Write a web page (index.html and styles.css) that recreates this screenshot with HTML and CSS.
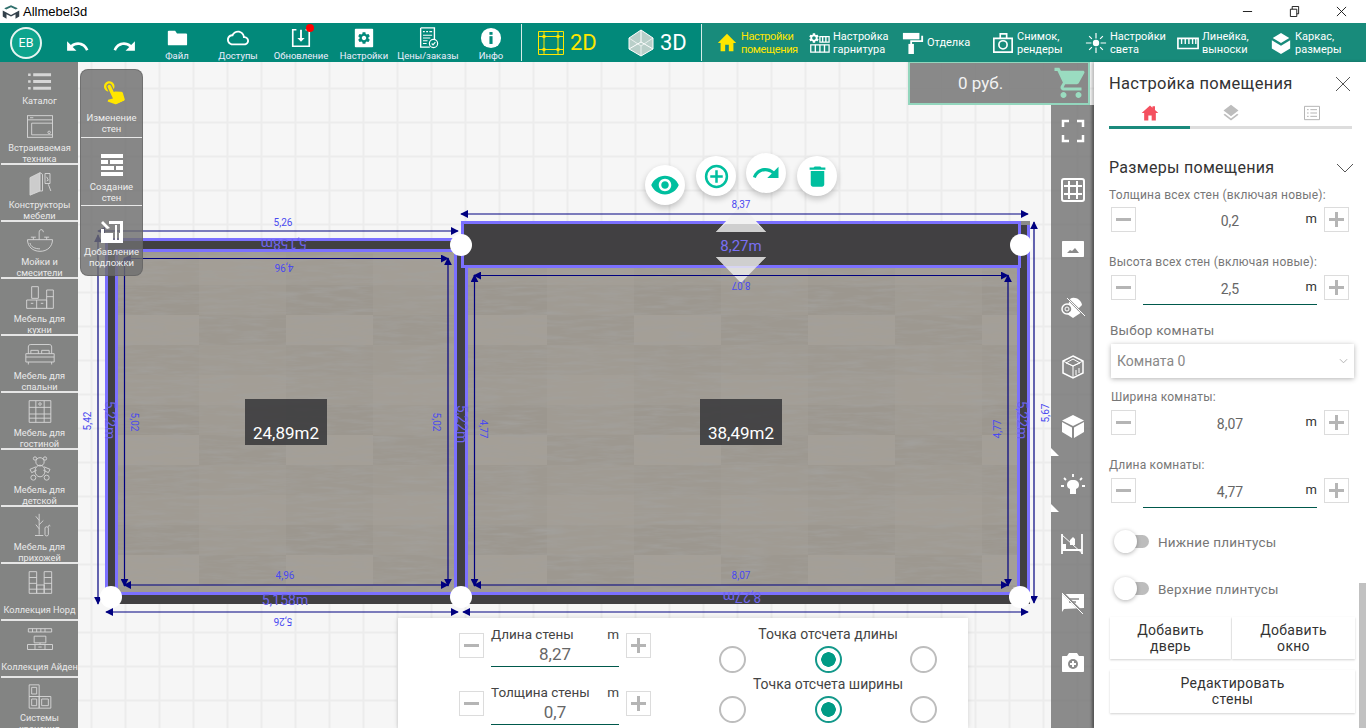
FILE: index.html
```html
<!DOCTYPE html>
<html lang="ru">
<head>
<meta charset="utf-8">
<title>Allmebel3d</title>
<link rel="stylesheet" href="styles.css">
</head>
<body>
<svg class="defs" width="0" height="0" aria-hidden="true">
  <defs>
    <symbol id="i-gear" viewBox="0 0 24 24"><path d="M19.14 12.94c.04-.3.06-.61.06-.94 0-.32-.02-.64-.07-.94l2.03-1.58c.18-.14.23-.41.12-.61l-1.92-3.32c-.12-.22-.37-.29-.59-.22l-2.39.96c-.5-.38-1.03-.7-1.62-.94l-.36-2.54c-.04-.24-.24-.41-.48-.41h-3.84c-.24 0-.43.17-.47.41l-.36 2.54c-.59.24-1.13.57-1.62.94l-2.39-.96c-.22-.08-.47 0-.59.22L2.74 8.87c-.12.21-.08.47.12.61l2.03 1.58c-.05.3-.09.63-.09.94s.02.64.07.94l-2.03 1.58c-.18.14-.23.41-.12.61l1.92 3.32c.12.22.37.29.59.22l2.39-.96c.5.38 1.03.7 1.62.94l.36 2.54c.05.24.24.41.48.41h3.84c.24 0 .44-.17.47-.41l.36-2.54c.59-.24 1.13-.56 1.62-.94l2.39.96c.22.08.47 0 .59-.22l1.92-3.32c.12-.22.07-.47-.12-.61l-2.01-1.58zM12 15.6c-1.98 0-3.6-1.62-3.6-3.6s1.62-3.6 3.6-3.6 3.6 1.62 3.6 3.6-1.62 3.6-3.6 3.6z"/></symbol>
    <marker id="arw" viewBox="0 0 10 10" refX="9" refY="5" markerWidth="8" markerHeight="8" markerUnits="userSpaceOnUse" orient="auto-start-reverse"><path d="M0 0L10 5L0 10z" fill="#000080"/></marker>
    <filter id="grain" x="0" y="0" width="100%" height="100%">
      <feTurbulence type="fractalNoise" baseFrequency="0.03 0.24" numOctaves="4" seed="11"/>
      <feColorMatrix values="0 0 0 0 0.36  0 0 0 0 0.35  0 0 0 0 0.33  1.2 1.2 0 0 -1.02"/>
    </filter>
    <pattern id="planks" width="174" height="120" patternUnits="userSpaceOnUse" patternTransform="translate(25 15)">
      <rect width="174" height="120" fill="#a09b93"/>
      <rect x="0" y="0" width="87" height="30" fill="#a39e96"/>
      <rect x="87" y="30" width="87" height="30" fill="#9c978f"/>
      <rect x="0" y="60" width="87" height="30" fill="#9d9890"/>
      <rect x="87" y="60" width="87" height="30" fill="#a49f97"/>
      <rect x="87" y="90" width="87" height="30" fill="#9e9991"/>
    </pattern>
  </defs>
</svg>

<header class="titlebar">
  <svg class="app-logo" viewBox="0 0 24 20"><path fill="#2f6f6c" d="M3 5l9-4 9 4-2.5 1.5L12 3.800 5.500 6.500z"/><path fill="#33414b" d="M1 8l11 6 11-6v8l-5 3v-6l-6 3-6-3v6l-5-3z"/></svg>
  <span class="app-name">Allmebel3d</span>
  <div class="win-controls">
    <svg viewBox="0 0 12 12"><path d="M1 6h10" stroke="#111" fill="none"/></svg>
    <svg viewBox="0 0 12 12"><path d="M1.500 3.500h7v8h-7zM3.500 3.500v-3h7v8h-2" stroke="#111" fill="none"/></svg>
    <svg viewBox="0 0 12 12"><path d="M1 1l10 10M11 1L1 11" stroke="#111" fill="none"/></svg>
  </div>
</header>

<nav class="toolbar">
  <div class="tools">
    <div class="avatar-cell"><span class="avatar">EB</span></div>
    <div class="tool"><svg class="ic-arrow" viewBox="0 0 24 24"><path d="M12.500 8c-2.650 0-5.050.99-6.900 2.600L2 7v9h9l-3.620-3.620c1.390-1.160 3.160-1.880 5.120-1.880 3.540 0 6.550 2.310 7.600 5.500l2.370-.78C21.080 11.030 17.150 8 12.500 8z"/></svg></div>
    <div class="tool"><svg class="ic-arrow" viewBox="0 0 24 24"><path d="M18.400 10.600C16.550 8.990 14.150 8 11.500 8c-4.650 0-8.580 3.030-9.960 7.220L3.900 16c1.050-3.190 4.050-5.500 7.600-5.500 1.950 0 3.730.72 5.120 1.880L13 16h9V7l-3.600 3.600z"/></svg></div>
    <div class="tool"><svg class="ic-top" viewBox="0 0 24 24"><path d="M10 4H3c-1.100 0-1 .9-1 2v13c0 .6.4 1 1 1h19c.6 0 1-.4 1-1V8c0-1.100-.9-1-2-1h-9l-2-3z"/></svg><span>Файл</span></div>
    <div class="tool"><svg class="ic-top" viewBox="0 0 24 24"><path d="M19.350 10.040C18.670 6.590 15.640 4 12 4 9.110 4 6.600 5.640 5.350 8.040 2.340 8.360 0 10.910 0 14c0 3.310 2.690 6 6 6h13c2.760 0 5-2.240 5-5 0-2.640-2.050-4.780-4.650-4.960zM19 18H6c-2.210 0-4-1.790-4-4s1.790-4 4-4h.71C7.370 7.690 9.480 6 12 6c3.040 0 5.500 2.460 5.500 5.500v.5H19c1.660 0 3 1.340 3 3s-1.340 3-3 3z"/></svg><span>Доступы</span></div>
    <div class="tool">
      <svg class="ic-top" viewBox="0 0 24 24"><path d="M7 3H3v18h18V3h-4" fill="none" stroke="#fff" stroke-width="1.800"/><path d="M11 3h2v9h3l-4 4-4-4h3z"/></svg>
      <span class="dot"></span><span>Обновление</span></div>
    <div class="tool"><svg class="ic-top" viewBox="0 0 24 24"><rect x="2" y="2" width="20" height="20" rx="1"/><use href="#i-gear" x="4" y="4" width="16" height="16" class="gear-cut"/></svg><span>Настройки</span></div>
    <div class="tool"><svg class="ic-top" viewBox="0 0 24 24"><path d="M4 1h15v12M14 22H4V1" fill="none" stroke="#fff" stroke-width="1.500"/><path d="M6.500 5h2M10 5h2M13.500 5h3M6.500 9h10M6.500 12h8M6.500 15h5M6.500 18h4" stroke="#fff" stroke-width="1.300"/><circle cx="18" cy="18" r="4.500" fill="#02897a" stroke="#fff" stroke-width="1.300"/><path d="M16 18l1.500 1.500 2.500-3" fill="none" stroke="#fff" stroke-width="1.200"/></svg><span>Цены/заказы</span></div>
    <div class="tool"><svg class="ic-top" viewBox="0 0 24 24"><circle cx="12" cy="12" r="11"/><rect x="10.300" y="10" width="3.400" height="8.500" fill="#02897a"/><rect x="10.300" y="5.500" width="3.400" height="3" fill="#02897a"/></svg><span>Инфо</span></div>
  </div>
  <div class="modes">
    <div class="mode mode-active">
      <svg class="ic-mode" viewBox="0 0 28 28"><path d="M1.500 2.500h25v23h-25zM1.500 7.500h25M1.500 20.500h25M7 2.500v23M21 2.500v23" fill="none" stroke="#ffe600" stroke-width="1"/><g fill="#ffe600"><circle cx="7" cy="7.500" r="1.800"/><circle cx="21" cy="7.500" r="1.800"/><circle cx="7" cy="20.500" r="1.800"/><circle cx="21" cy="20.500" r="1.800"/></g></svg>
      <span>2D</span>
    </div>
    <div class="mode">
      <svg class="ic-mode" viewBox="0 0 28 28"><path d="M14 1l12 8v11l-12 7-12-7V9z" fill="#b9cfc9" stroke="#fff"/><path d="M14 1v12l12 7M14 13L2 20" fill="none" stroke="#fff"/><path d="M2 9l12 8 12-8M14 17v10" fill="none" stroke="#fff" stroke-width=".7"/></svg>
      <span>3D</span>
    </div>
  </div>
  <div class="settings-tools">
    <div class="stool stool-active"><svg class="ic-s" viewBox="0 0 24 24"><path d="M10 21v-7h4v7h5v-9h3L12 2 2 12h3v9z"/></svg><span>Настройки<br>помещения</span></div>
    <div class="stool"><svg class="ic-s" viewBox="0 0 24 24"><use href="#i-gear" x="0" y="0" width="13" height="13"/><path d="M13 5h10v6H13zM3 14h20v8H3z" fill="none" stroke="#fff" stroke-width="1.400"/><path d="M16 5v6M19.500 5v6M8 14v8M13 14v8M18 14v8" stroke="#fff" stroke-width="1.500"/></svg><span>Настройка<br>гарнитура</span></div>
    <div class="stool"><svg class="ic-s" viewBox="0 0 24 24"><path d="M1 1h18v7H1z"/><path d="M21 4h2v7H11v4H9V9h12z"/><path d="M7 13h6v11H7z"/></svg><span class="one-line">Отделка</span></div>
    <div class="stool"><svg class="ic-s" viewBox="0 0 24 24"><path d="M9 6V2h7v4M2 7h20v15H2z" fill="none" stroke="#fff" stroke-width="1.800"/><circle cx="12" cy="14" r="4.500" fill="none" stroke="#fff" stroke-width="1.800"/></svg><span>Снимок,<br>рендеры</span></div>
    <div class="stool"><svg class="ic-s" viewBox="0 0 24 24"><circle cx="12" cy="12" r="3.500"/><path d="M12 1v6M12 17v6M1 12h6M17 12h6M4.500 4.500l3 3M16.500 16.500l3 3M19.500 4.500l-3 3M7.500 16.500l-3 3" stroke="#fff" stroke-width="1.300"/></svg><span>Настройки<br>света</span></div>
    <div class="stool"><svg class="ic-s" viewBox="0 0 24 24"><path d="M1 7h22v11H1z" fill="none" stroke="#fff" stroke-width="1.800"/><path d="M5 7v6M9 7v6M13 7v6M17 7v6M20.500 7v6" stroke="#fff" stroke-width="1.500"/></svg><span>Линейка,<br>выноски</span></div>
    <div class="stool"><svg class="ic-s" viewBox="0 0 24 24"><path d="M12 1l9 5.500-9 5.500-9-5.500z"/><path d="M2 9l10 6 10-6v9l-10 6-10-6z"/></svg><span>Каркас,<br>размеры</span></div>
  </div>
</nav>

<main class="workspace">
  <aside class="catalog">
    <div class="cat cat-first"><svg class="ic-cat" viewBox="0 0 40 24"><path d="M12 4h21M12 12h21M12 20h21" stroke-width="3.500"/><path d="M6 4h3M6 12h3M6 20h3" stroke-width="3"/></svg><span>Каталог</span></div>
    <div class="cat"><svg class="ic-cat" viewBox="0 0 40 30"><rect x="5" y="2" width="30" height="26"/><path d="M5 7h30M8 4.500h4M10 11h25M10 11v14h25"/><circle cx="31" cy="22" r="1.500"/></svg><span>Встраиваемая<br>техника</span></div>
    <div class="cat"><svg class="ic-cat" viewBox="0 0 40 30"><path d="M8 8l12-6v22l-12 5z" fill="#ccc"/><path d="M20 2l3 2v20l-3 0M26 3l6 0v12l-6 0z"/><path d="M28 7l2 4-2 1M30 16l3 8"/></svg><span>Конструкторы<br>мебели</span></div>
    <div class="cat"><svg class="ic-cat" viewBox="0 0 40 30"><path d="M5 14h30c0 8-6 14-15 14S5 22 5 14zM8 18c1 5 6 7 12 7"/><path d="M19 14V5c0-4 5-4 5 0M12 14v-3M9 11h6M28 14v-3M25 11h6"/></svg><span>Мойки и<br>смесители</span></div>
    <div class="cat"><svg class="ic-cat" viewBox="0 0 40 30"><path d="M10 2h8v14h-8zM28 6h8v22h-8zM28 14h8M4 18h24v10H4zM16 18v10M9 22h3M21 22h3"/></svg><span>Мебель для<br>кухни</span></div>
    <div class="cat"><svg class="ic-cat" viewBox="0 0 40 30"><path d="M6 14V6c0-2 1-3 3-3h22c2 0 3 1 3 3v8M3 14h34v10H3zM6 24v3M34 24v3M3 18h34M9 14v-4h9v4M22 14v-4h9v4"/></svg><span>Мебель для<br>спальни</span></div>
    <div class="cat"><svg class="ic-cat" viewBox="0 0 40 30"><path d="M7 2h26v26H7zM15 2v26M25 2v26M7 10h8M7 18h26M7 23h26M25 10h8M15 10h10"/><circle cx="20" cy="6" r="1.500"/></svg><span>Мебель для<br>гостиной</span></div>
    <div class="cat"><svg class="ic-cat" viewBox="0 0 40 30"><circle cx="20" cy="7" r="5"/><circle cx="14" cy="3" r="2"/><circle cx="26" cy="3" r="2"/><ellipse cx="20" cy="18" rx="6" ry="7"/><path d="M15 13l-7 3 2 4 6-3M25 13l7 3-2 4-6-3"/><circle cx="12" cy="26" r="3"/><circle cx="28" cy="26" r="3"/></svg><span>Мебель для<br>детской</span></div>
    <div class="cat"><svg class="ic-cat" viewBox="0 0 40 30"><path d="M19 1v25M19 9l-4-5M19 14l5-5M19 19l-4-5M14 27h10"/><path d="M26 18c0-2 4-2 4 0v8c0 2-4 2-4 0zM30 17c0-3 2-3 2-1"/></svg><span>Мебель для<br>прихожей</span></div>
    <div class="cat"><svg class="ic-cat" viewBox="0 0 40 30"><path d="M7 2h9v26H7zM25 2h9v26h-9zM16 18h9v10h-9zM7 9h9M25 9h9M7 16h9M25 16h9M7 23h27"/></svg><span>Коллекция Норд</span></div>
    <div class="cat"><svg class="ic-cat" viewBox="0 0 40 30"><path d="M6 2h28v4H6zM11 2v4M16 2v4M21 2v4M26 2v4M13 11h14v8H13zM20 19v2M5 21h30v6H5zM14 21v6M26 21v6M18 24h4"/></svg><span>Коллекция Айден</span></div>
    <div class="cat cat-last"><svg class="ic-cat" viewBox="0 0 40 30"><path d="M7 1h12v14H7zM7 15h12v14H7zM19 15h14v14H19zM10 4h6v8h-6zM10 18h6v8h-6zM22 18h8v8h-8z"/></svg><span>Системы<br>хранения</span></div>
  </aside>

  <section class="canvas">
    <svg class="plan" viewBox="78 62 1016 666" width="1016" height="666">
      <!-- dark wall masses -->
      <rect class="wall" x="105" y="238" width="362" height="366"/>
      <rect class="wall" x="461" y="221" width="569" height="383"/>
      <path class="pline" d="M106.500 600V239.500H460"/>
      <path class="pline" d="M1028.500 225V597"/>
      <rect x="1021" y="221" width="9" height="4" fill="#8b8b8b"/>
      <!-- floors -->
      <rect class="floor" x="116.500" y="250.500" width="339" height="343"/>
      <rect class="floor" x="466.500" y="266.500" width="552" height="327"/>
      <rect x="118" y="252" width="336" height="340" fill="#000" filter="url(#grain)"/>
      <rect x="468" y="268" width="549" height="324" fill="#000" filter="url(#grain)"/>
      <!-- selected wall -->
      <rect class="selected" x="462.500" y="222.500" width="557" height="44"/>
      <path d="M741 205L766 232H716z" fill="#f2f2f2"/>
      <path d="M725 224H757L766 232H716z" fill="#cfcfcf"/>
      <path d="M716 257H766L741 283z" fill="#efefef" fill-opacity=".8"/>
      <path d="M716 257H766L757 266H725z" fill="#cfcfcf"/>
      <!-- dimension lines -->
      <g class="dim">
        <line x1="461" y1="214" x2="1028" y2="214"/>
        <line x1="1034" y1="222" x2="1034" y2="603"/>
        <line x1="463" y1="612" x2="1028" y2="612"/>
        <line x1="98" y1="231" x2="458" y2="231"/>
        <line x1="98" y1="235" x2="98" y2="604"/>
        <line x1="106" y1="612" x2="458" y2="612"/>
        <line x1="124" y1="258.500" x2="448" y2="258.500"/>
        <line x1="124.500" y1="258" x2="124.500" y2="586"/>
        <line x1="448" y1="258" x2="448" y2="586"/>
        <line x1="124" y1="585" x2="448" y2="585"/>
        <line x1="474" y1="275.500" x2="1008" y2="275.500"/>
        <line x1="474.500" y1="275" x2="474.500" y2="586"/>
        <line x1="1008" y1="275" x2="1008" y2="586"/>
        <line x1="474" y1="585" x2="1008" y2="585"/>
      </g>
      <!-- dimension labels -->
      <g class="lbl">
        <text x="283" y="226">5,26</text>
        <text transform="rotate(180 284 268)" x="284" y="272">4,96</text>
        <text x="285" y="579">4,96</text>
        <text transform="rotate(180 283 622)" x="283" y="626">5,26</text>
        <text transform="rotate(-90 87 421)" x="87" y="425">5,42</text>
        <text transform="rotate(90 135 422)" x="135" y="426">5,02</text>
        <text transform="rotate(90 437 422)" x="437" y="426">5,02</text>
        <text transform="rotate(90 484 429)" x="484" y="433">4,77</text>
        <text transform="rotate(-90 997 429)" x="997" y="433">4,77</text>
        <text transform="rotate(-90 1045 413)" x="1045" y="417">5,67</text>
        <text x="741" y="208">8,37</text>
        <text transform="rotate(180 741 286)" x="741" y="290">8,07</text>
        <text x="741" y="579">8,07</text>
      </g>
      <g class="lbl lbl-big">
        <text transform="rotate(180 284 244)" x="284" y="249">5,158m</text>
        <text x="285" y="605">5,158m</text>
        <text transform="rotate(180 742 597)" x="742" y="602">8,27m</text>
        <text transform="rotate(90 110 420)" x="110" y="425">5,22m</text>
        <text transform="rotate(90 462 424)" x="462" y="429">5,22m</text>
        <text transform="rotate(90 1022 420)" x="1022" y="425">5,22m</text>
      </g>
      <text class="lbl-sel" x="741" y="251">8,27m</text>
      <!-- room tags -->
      <rect class="tag" x="245" y="399" width="82" height="46"/>
      <rect class="tag" x="700" y="399" width="82" height="46"/>
      <text class="tag-text" x="286" y="439">24,89m2</text>
      <text class="tag-text" x="741" y="439">38,49m2</text>
      <!-- corner handles -->
      <g fill="#fff">
        <circle cx="461" cy="245" r="11"/>
        <circle cx="1021" cy="245" r="11"/>
        <circle cx="461" cy="597" r="11"/>
        <circle cx="1020" cy="597" r="11"/>
        <circle cx="111" cy="597" r="11"/>
      </g>
    </svg>

    <div class="modes-panel">
      <div class="sub"><svg class="ic-hand" viewBox="0 0 24 24"><path d="M9 11.240V7.500C9 6.120 10.120 5 11.500 5S14 6.120 14 7.500v3.740c1.210-.81 2-2.180 2-3.740C16 5.010 13.990 3 11.500 3S7 5.010 7 7.500c0 1.560.79 2.930 2 3.740zm9.840 4.630l-4.540-2.260c-.17-.07-.35-.11-.54-.11H13v-6c0-.83-.67-1.500-1.500-1.500S10 6.670 10 7.500v10.740l-3.430-.72c-.08-.01-.15-.03-.24-.03-.31 0-.59.13-.79.33l-.79.8 4.940 4.940c.27.27.65.44 1.060.44h6.790c.75 0 1.330-.55 1.440-1.280l.75-5.270c.01-.07.02-.14.02-.2 0-.62-.38-1.160-.91-1.380z"/></svg><span>Изменение<br>стен</span></div>
      <div class="sub sub-mid"><svg class="ic-sub" viewBox="0 0 24 24"><path d="M1 1h22v4H1zM1 7h7v4H1zM10 7h13v4H10zM1 13h13v4H1zM16 13h7v4h-7zM1 19h22v4H1z"/></svg><span>Создание<br>стен</span></div>
      <div class="sub sub-last"><svg class="ic-sub" viewBox="0 0 24 24"><path d="M9 1h14v22H1V9h3v11h16V4H9z"/><path d="M1 3l2-2 7 7-3 1zM4 13h9v7H4zM15 5h2v15h-2zM19 13h1v7h-1z"/></svg><span>Добавление<br>подложки</span></div>
    </div>

    <div class="cost"><span>0 руб.</span><svg class="ic-cart" viewBox="0 0 24 24"><path d="M7 18c-1.100 0-1.990.9-1.990 2S5.900 22 7 22s2-.9 2-2-.9-2-2-2zM1 2v2h2l3.600 7.590-1.350 2.450c-.16.28-.25.61-.25.96 0 1.100.9 2 2 2h12v-2H7.420c-.14 0-.25-.11-.25-.25l.03-.12.9-1.830h7.450c.75 0 1.410-.41 1.750-1.030l3.580-6.490c.08-.14.12-.31.12-.48 0-.55-.45-1-1-1H5.210l-.94-2H1zm16 16c-1.100 0-1.990.9-1.990 2s.89 2 1.990 2 2-.9 2-2-.9-2-2-2z"/></svg></div>

    <div class="side-rail">
      <svg viewBox="0 0 24 24"><path d="M2 8V2h6M16 2h6v6M22 16v6h-6M8 22H2v-6" fill="none" stroke="#fff" stroke-width="2.500"/></svg>
      <svg viewBox="0 0 24 24"><path d="M3 1h18c1 0 2 1 2 2v18c0 1-1 2-2 2H3c-1 0-2-1-2-2V3c0-1 1-2 2-2zM3 8h18M3 16h18M8 3v18M16 3v18" fill="none" stroke="#fff" stroke-width="2"/></svg>
      <svg viewBox="0 0 24 24"><path d="M2 4h20c.6 0 1 .4 1 1v14c0 .6-.4 1-1 1H2c-.6 0-1-.4-1-1V5c0-.6.4-1 1-1zm4 12h12l-4-5-3 3-2-1z" fill-rule="evenodd"/></svg>
      <svg viewBox="0 0 24 24"><path d="M9 3c4-3 11 0 12 6l-7 7H5z"/><circle cx="6" cy="13" r="5" fill="#8b8b8b" stroke="#fff" stroke-width="1.500"/><circle cx="6" cy="13" r="2" fill="none" stroke="#fff"/><path d="M6 18l6 4 9-6-7-3z"/><path d="M7 3l17 17" stroke="#8b8b8b" stroke-width="2"/><path d="M6 2l18 18" stroke="#fff"/></svg>
      <svg viewBox="0 0 24 24"><path d="M12 1l10 5v12l-10 5-10-5V6z" fill="none" stroke="#fff" stroke-width="1.500"/><path d="M2 6l10 5 10-5M12 11v12M5 8l7-4 7 4-7 3z" fill="none" stroke="#fff"/><path d="M15 15v5M18 13v5" stroke="#fff"/></svg>
      <svg viewBox="0 0 24 24"><path d="M12 1l11 5.500L12 12 1 6.500zM1 8l10 5.500V24L1 18zM23 8l-10 5.500V24l10-6z"/></svg>
      <svg viewBox="0 0 24 24"><path d="M12 7c-4 0-6 2-6 5 0 2 1 3 3 4v5h6v-5c2-1 3-2 3-4 0-3-2-5-6-5z"/><path d="M12 1v3M3 5l2 2M21 5l-2 2M0 13h3M21 13h3" stroke="#fff" stroke-width="1.800"/></svg>
      <svg viewBox="0 0 24 24"><path d="M1 2v20M1 18h20M21 2v20" fill="none" stroke="#fff" stroke-width="1.800"/><path d="M1 12h4v6H1zM9 8l3-3 2 2v6h-5z"/><path d="M1 3l21 19" stroke="#fff"/></svg>
      <svg viewBox="0 0 24 24"><path d="M1 3h22v14l-20 1 -2 3z"/><path d="M8 8h10M8 11h7" stroke="#8b8b8b" stroke-width="1.500"/><path d="M1 1l22 22" stroke="#8b8b8b" stroke-width="2.400"/><path d="M1 2l21 21" stroke="#fff"/></svg>
      <svg viewBox="0 0 24 24"><path d="M8 3h8l2 3h4c.6 0 1 .4 1 1v14c0 .6-.4 1-1 1H2c-.6 0-1-.4-1-1V7c0-.6.4-1 1-1h4z"/><circle cx="12" cy="14" r="5" fill="#8b8b8b"/><path d="M12 11v6M9 14h6" stroke="#fff" stroke-width="2"/></svg>
      <i class="notch notch-a"></i><i class="notch notch-b"></i>
    </div>

    <div class="fab fab-eye"><svg viewBox="0 0 24 24"><path d="M12 4.500C7 4.500 2.730 7.610 1 12c1.730 4.390 6 7.500 11 7.500s9.270-3.110 11-7.500c-1.730-4.390-6-7.500-11-7.500zM12 17c-2.760 0-5-2.240-5-5s2.240-5 5-5 5 2.240 5 5-2.240 5-5 5zm0-8c-1.660 0-3 1.340-3 3s1.340 3 3 3 3-1.340 3-3-1.340-3-3-3z"/></svg></div>
    <div class="fab fab-add"><svg viewBox="0 0 24 24"><circle cx="12" cy="12" r="10" fill="none" stroke="#00bf9f" stroke-width="2.400"/><path d="M12 6v12M6 12h12" stroke="#00bf9f" stroke-width="2.400"/></svg></div>
    <div class="fab fab-redo"><svg viewBox="0 0 24 24"><path d="M18.400 10.600C16.550 8.990 14.150 8 11.500 8c-4.650 0-8.580 3.030-9.960 7.220L3.900 16c1.050-3.190 4.050-5.500 7.600-5.500 1.950 0 3.730.72 5.120 1.880L13 16h9V7l-3.600 3.600z"/></svg></div>
    <div class="fab fab-del"><svg viewBox="0 0 24 24"><path d="M6 19c0 1.100.9 2 2 2h8c1.100 0 2-.9 2-2V7H6v12zM19 4h-3.500l-1-1h-5l-1 1H5v2h14V4z"/></svg></div>

    <div class="wall-bar">
      <div class="wall-fields">
        <div class="wf-row">
          <span class="sq-btn sq-minus"><i></i></span>
          <div class="wf-field"><div class="wf-top"><span>Длина стены</span><span>m</span></div><div class="wf-val">8,27</div></div>
          <span class="sq-btn sq-plus"><i></i></span>
        </div>
        <div class="wf-row">
          <span class="sq-btn sq-minus"><i></i></span>
          <div class="wf-field"><div class="wf-top"><span>Толщина стены</span><span>m</span></div><div class="wf-val">0,7</div></div>
          <span class="sq-btn sq-plus"><i></i></span>
        </div>
      </div>
      <div class="wall-origin">
        <div class="origin-title">Точка отсчета длины</div>
        <div class="radios"><span class="radio"></span><span class="radio radio-on"></span><span class="radio"></span></div>
        <div class="origin-title origin-second">Точка отсчета ширины</div>
        <div class="radios"><span class="radio"></span><span class="radio radio-on"></span><span class="radio"></span></div>
      </div>
    </div>
  </section>

  <aside class="panel">
    <div class="panel-head"><span>Настройка помещения</span><svg class="ic-close" viewBox="0 0 14 14"><path d="M0 0l14 14M14 0L0 14" stroke="#555" fill="none"/></svg></div>
    <div class="tabs">
      <div class="tab tab-on"><svg viewBox="0 0 24 24"><path d="M10 21v-6h4v6h5v-9h3l-4-3.600V4h-3v1.700L12 3 2 12h3v9z"/></svg></div>
      <div class="tab"><svg viewBox="0 0 24 24"><path d="M11.990 18.540l-7.370-5.730L3 14.070l9 7 9-7-1.630-1.270-7.380 5.740zM12 16l7.360-5.730L21 9l-9-7-9 7 1.630 1.270L12 16z"/></svg></div>
      <div class="tab"><svg viewBox="0 0 24 24"><path d="M3 4h18v16H3zM6 8h2M10 8h8M6 12h2M10 12h8M6 16h2M10 16h8" fill="none" stroke="#b5b5b5" stroke-width="1.200"/></svg></div>
    </div>
    <div class="section-head"><span>Размеры помещения</span><svg class="ic-chev" viewBox="0 0 18 10"><path d="M1 1l8 8 8-8" fill="none" stroke="#555"/></svg></div>

    <div class="flabel flabel-1">Толщина всех стен (включая новые):</div>
    <div class="stepper stepper-first"><span class="sq-btn sq-minus"><i></i></span><div class="st-field"><span class="st-val">0,2</span><span class="st-unit">m</span></div><span class="sq-btn sq-plus"><i></i></span></div>
    <div class="flabel flabel-2">Высота всех стен (включая новые):</div>
    <div class="stepper"><span class="sq-btn sq-minus"><i></i></span><div class="st-field st-line"><span class="st-val">2,5</span><span class="st-unit">m</span></div><span class="sq-btn sq-plus"><i></i></span></div>

    <div class="room-label">Выбор комнаты</div>
    <div class="select"><span>Комната 0</span><svg viewBox="0 0 10 6"><path d="M1 1l4 4 4-4" fill="none" stroke="#aaa"/></svg></div>

    <div class="flabel flabel-3">Ширина комнаты:</div>
    <div class="stepper"><span class="sq-btn sq-minus"><i></i></span><div class="st-field"><span class="st-val">8,07</span><span class="st-unit">m</span></div><span class="sq-btn sq-plus"><i></i></span></div>
    <div class="flabel flabel-2">Длина комнаты:</div>
    <div class="stepper"><span class="sq-btn sq-minus"><i></i></span><div class="st-field st-line"><span class="st-val">4,77</span><span class="st-unit">m</span></div><span class="sq-btn sq-plus"><i></i></span></div>

    <div class="toggle toggle-1"><span class="switch"></span><span>Нижние плинтусы</span></div>
    <div class="toggle toggle-2"><span class="switch"></span><span>Верхние плинтусы</span></div>

    <div class="btn-row"><div class="pbtn">Добавить<br>дверь</div><div class="pbtn">Добавить<br>окно</div></div>
    <div class="pbtn pbtn-wide">Редактировать<br>стены</div>
    <div class="scroll-thumb"></div>
  </aside>
</main>
</body>
</html>
```
FILE: styles.css
```css
* { box-sizing: border-box; }
html, body { margin: 0; padding: 0; width: 1366px; height: 728px; overflow: hidden; }
body { font-family: Roboto, "Noto Sans", sans-serif; background: #fff; color: #333; }
.defs { position: absolute; }

/* title bar */
.titlebar { height: 23px; display: flex; align-items: center; background: #fff; padding-left: 2px; }
.app-logo { width: 18px; height: 16px; }
.app-name { margin-left: 3px; font: 13px "Liberation Sans", Arial, sans-serif; color: #000; }
.win-controls { margin-left: auto; display: flex; gap: 36px; padding-right: 19px; }
.win-controls svg { width: 11px; height: 11px; }

/* toolbar */
.toolbar { height: 39px; display: flex; background: #02897a; color: #fff; }
.tools { display: grid; grid-template-columns: 52px 50px 45px 60px 62px 64px 62px 66px 60px; width: 521px; }
.avatar-cell { display: flex; align-items: center; padding-left: 10px; }
.avatar { width: 32px; height: 32px; border-radius: 50%; border: 2.500px solid #e8f5f2; background: #0ea48d; display: flex; align-items: center; justify-content: center; font-size: 12.500px; color: #fff; }
.tool { position: relative; display: flex; flex-direction: column; align-items: center; justify-content: flex-end; font-size: 9.500px; white-space: nowrap; padding-bottom: 1px; fill: #fff; color: #eef; line-height: 11px; }
.ic-arrow { width: 25px; height: 25px; fill: #fff; margin-bottom: 2px; }
.ic-top { width: 22px; height: 22px; fill: #fff; margin-bottom: 1px; }
.gear-cut { fill: #02897a; }
.dot { position: absolute; top: 1px; left: 37px; width: 8px; height: 8px; border-radius: 50%; background: #f00; }
.modes { width: 181px; display: grid; grid-template-columns: 90px 90px; border-left: 1px solid #d8ece8; border-right: 1px solid #d8ece8; margin: 1px 0; }
.mode { display: flex; align-items: center; gap: 5px; padding-left: 15px; font-size: 22px; color: #fff; }
.mode-active { color: #ffe600; }
.ic-mode { width: 28px; height: 28px; flex: none; }
.settings-tools { flex: 1; display: grid; grid-template-columns: 92px 94px 90px 93px 92px 93px 90px; padding-left: 14px; background: #188b7b; }
.stool { display: flex; align-items: center; gap: 3px; font-size: 11px; line-height: 13px; color: #fff; white-space: nowrap; fill: #fff; }
.stool-active { color: #ffe600; fill: #ffe600; letter-spacing: -.4px; }
.ic-s { width: 22px; height: 24px; flex: none; }

/* workspace */
.workspace { height: 666px; display: flex; }

/* catalog */
.catalog { width: 78px; flex: none; background: #838483; overflow: hidden; color: #eaeaea; display: flex; flex-direction: column; position: relative; z-index: 2; }
.cat { height: 57px; flex: none; display: flex; flex-direction: column; align-items: center; justify-content: space-between; border-bottom: 2px solid #e6e6e6; font-size: 9.200px; line-height: 11px; text-align: center; white-space: nowrap; padding: 6px 0 0; margin-left: 1px; }
.cat span { min-height: 22px; margin-bottom: -1px; display: flex; align-items: center; justify-content: center; }
.cat-first { height: 46px; border-bottom: 0; padding-top: 7px; justify-content: flex-start; gap: 1px; }
.cat-first span { min-height: 11px; margin-bottom: 0; }
.cat-last { height: 60px; border-bottom: 0; justify-content: flex-start; gap: 3px; }
.ic-cat { width: 34px; height: 25px; flex: none; fill: none; stroke: #d6d6d6; stroke-width: 1.100; }

/* canvas */
.canvas { position: relative; width: 1016px; flex: none; background-color: #f6f6f6;
  background-image: linear-gradient(90deg, transparent, #ececec 1px, #ececec 2px, transparent 3px), linear-gradient(transparent, #ececec 1px, #ececec 2px, transparent 3px);
  background-size: 34px 34px; background-position: 12px 25px; }
.plan { position: absolute; left: 0; top: 0; display: block; }
.wall { fill: #414042; }
.pline { fill: none; stroke: #7b70ff; stroke-width: 3; }
.floor { fill: url(#planks); stroke: #7b70ff; stroke-width: 3; }
.selected { fill: #414042; stroke: #7b70ff; stroke-width: 3; }
.dim line { stroke: #000080; stroke-width: 1.200; marker-start: url(#arw); marker-end: url(#arw); }
.lbl text { font: 10px Roboto, sans-serif; fill: #4a4af0; text-anchor: middle; }
.lbl-big text { font-size: 14px; fill: #6e64ee; }
.lbl-sel { font: 15px Roboto, sans-serif; fill: #7a70f5; text-anchor: middle; }
.tag { fill: #3c3c3e; fill-opacity: .9; }
.tag-text { font: 17px Roboto, sans-serif; fill: #fff; text-anchor: middle; }

/* left floating modes */
.modes-panel { position: absolute; left: 2px; top: 7px; width: 63px; height: 207px; background: rgba(110,110,110,.82); border-radius: 8px; border: 1px solid rgba(90,90,90,.5); color: #eee; z-index: 3; }
.sub { height: 68px; display: flex; flex-direction: column; align-items: center; justify-content: flex-end; font-size: 9.500px; line-height: 11px; text-align: center; border-bottom: 1.500px solid #e8e8e8; padding-bottom: 3px; white-space: nowrap; }
.sub-mid { padding-bottom: 2px; }
.sub-mid .ic-sub { margin-bottom: 4px; }
.sub-last { border-bottom: 0; height: 69px; padding-bottom: 7px; }
.sub-last .ic-sub { margin-bottom: 2px; }
.ic-hand { width: 28px; height: 28px; fill: #ffe600; transform: rotate(-25deg); margin-bottom: 7px; }
.ic-sub { width: 24px; height: 24px; fill: #fff; }

/* cost */
.cost { position: absolute; left: 830px; top: 0; width: 182px; height: 43px; background: rgba(125,125,125,.9); border: 2px solid #93d6bd; border-top-width: 1px; display: flex; align-items: center; color: #f2f2f2; font-size: 17px; padding-left: 48px; z-index: 3; }
.ic-cart { position: absolute; right: -1px; top: 2px; width: 36px; height: 36px; fill: #9adcc0; }

/* right rail */
.side-rail { position: absolute; left: 973px; top: 43px; width: 43px; bottom: 0; background: rgba(115,115,115,.82); display: flex; flex-direction: column; align-items: center; padding-top: 14px; gap: 35px; fill: #fff; box-shadow: inset -3px 0 2px -1px rgba(60,60,60,.35); z-index: 2; }
.side-rail svg { width: 24px; height: 24px; flex: none; }
.notch { position: absolute; left: 0; width: 8px; height: 8px; background: #fff; clip-path: polygon(0 0, 100% 100%, 0 100%); }
.notch-a { top: 343px; }
.notch-b { top: 399px; }

/* floating round buttons */
.fab { position: absolute; width: 40px; height: 40px; border-radius: 50%; background: #fff; box-shadow: 0 3px 6px rgba(0,0,0,.22); display: flex; align-items: center; justify-content: center; fill: #00bf9f; z-index: 2; }
.fab svg { width: 30px; height: 30px; }
.fab-eye { left: 567px; top: 103px; }
.fab-add { left: 618px; top: 94px; }
.fab-add svg { width: 25px; height: 25px; }
.fab-redo { left: 668px; top: 91px; }
.fab-del { left: 719px; top: 94px; }
.fab-del svg { width: 27px; height: 27px; }

/* bottom bar */
.wall-bar { position: absolute; left: 320px; bottom: 0; width: 570px; height: 110px; background: #fff; box-shadow: 0 0 5px rgba(0,0,0,.15); display: flex; padding-top: 8px; z-index: 2; }
.wall-fields { width: 287px; flex: none; padding-left: 61px; display: flex; flex-direction: column; gap: 17px; }
.wf-row { display: flex; gap: 7px; align-items: flex-start; }
.wf-row .sq-btn { margin-top: 7px; }
.wf-field { width: 128px; height: 41px; border-bottom: 1.500px solid #00594c; flex: none; }
.wf-top { display: flex; justify-content: space-between; font-size: 13.500px; line-height: 16px; color: #444; }
.wf-val { text-align: center; font-size: 17px; line-height: 24px; color: #666; }
.wall-origin { width: 283px; flex: none; }
.origin-title { width: 286px; text-align: center; font-size: 14px; line-height: 16px; color: #444; white-space: nowrap; }
.origin-second { margin-top: 3px; }
.radios { display: grid; grid-template-columns: repeat(3, 95.500px); margin: 4px 0 0 0; justify-items: center; }
.radio { width: 27px; height: 27px; border-radius: 50%; border: 2.500px solid #bdbdbd; display: block; background: #fff; }
.radio-on { border-color: #13988a; background: radial-gradient(circle, #009b85 0 7px, #fff 7.500px); }

/* square +/- */
.sq-btn { width: 25px; height: 25px; border: 1px solid #dcdcdc; display: block; position: relative; flex: none; background: #fff; }
.sq-btn i { position: absolute; left: 4px; right: 4px; top: 10px; height: 3px; background: #b5b5b5; }
.sq-plus::after { content: ""; position: absolute; top: 4px; bottom: 4px; left: 10px; width: 3px; background: #b5b5b5; }

/* right panel */
.panel { position: relative; width: 272px; flex: none; background: #fff; padding-left: 15px; box-shadow: -2px 0 3px rgba(0,0,0,.25); z-index: 4; overflow: hidden; }
.panel-head { width: 243px; padding-top: 6px; display: flex; justify-content: space-between; align-items: center; height: 38px; font-size: 16.500px; line-height: 20px; letter-spacing: .3px; color: #333; }
.ic-close { width: 14px; height: 14px; margin-right: 2px; }
.tabs { width: 243px; height: 29px; display: grid; grid-template-columns: 81px 81px 81px; border-bottom: 3px solid #ddd; }
.tab { display: flex; justify-content: center; align-items: flex-start; margin-bottom: -3px; fill: #bdbdbd; }
.tab svg { width: 20px; height: 20px; margin-top: 3px; }
.tab-on { border-bottom: 3px solid #1b8a7c; fill: #f4505f; }
.section-head { margin-top: 29px; width: 245px; display: flex; justify-content: space-between; align-items: center; font-size: 16px; line-height: 20px; letter-spacing: .3px; color: #333; }
.ic-chev { width: 18px; height: 10px; }
.flabel { font-size: 12px; line-height: 14px; color: #777; letter-spacing: .2px; white-space: nowrap; }
.flabel-1 { margin-top: 10px; }
.flabel-2 { margin-top: 18px; }
.flabel-3 { margin-top: 12px; margin-left: 2px; }
.stepper { margin-top: 6px; margin-left: 2px; display: flex; gap: 7px; height: 30px; align-items: flex-start; }
.stepper-first { margin-top: 5px; }
.st-field { width: 174px; height: 30px; position: relative; flex: none; }
.st-line { border-bottom: 1.500px solid #00594c; }
.st-val { position: absolute; left: 0; right: 0; top: 5px; text-align: center; font-size: 14px; line-height: 18px; color: #666; }
.st-unit { position: absolute; right: 0; top: 3px; font-size: 13px; line-height: 18px; color: #333; }
.room-label { margin-top: 17px; margin-left: 1px; font-size: 13.500px; line-height: 16px; color: #777; letter-spacing: .2px; }
.select { margin: 6px 0 0 2px; width: 243px; height: 34px; padding: 0 6px; display: flex; align-items: center; justify-content: space-between; font-size: 14px; color: #888; box-shadow: 0 1px 5px rgba(0,0,0,.3); background: #fff; }
.select svg { width: 9px; height: 6px; }
.toggle { display: flex; align-items: center; gap: 9px; height: 24px; font-size: 13.500px; letter-spacing: .2px; color: #777; margin-left: 5px; }
.toggle-1 { margin-top: 22px; }
.toggle-2 { margin-top: 23px; }
.switch { width: 35px; height: 24px; position: relative; display: block; flex: none; }
.switch::before { content: ""; position: absolute; left: 6px; right: 0; top: 5px; height: 13px; background: #bdbdbd; border-radius: 7px; }
.switch::after { content: ""; position: absolute; left: 0; top: 0; width: 23px; height: 23px; border-radius: 50%; background: #fff; box-shadow: 0 1px 4px rgba(0,0,0,.3); }
.btn-row { margin: 16px 0 0 1px; display: grid; grid-template-columns: 121px 123px; gap: 1px; width: 245px; }
.pbtn { height: 42px; background: #fff; box-shadow: 0 1px 2px rgba(0,0,0,.18); text-align: center; font-size: 14px; line-height: 16px; letter-spacing: .3px; color: #333; padding-top: 5px; }
.pbtn-wide { margin: 11px 0 0 1px; width: 245px; height: 43px; }
.scroll-thumb { position: absolute; right: 0; top: 521px; bottom: 0; width: 7px; background: #c1c1c1; }
```
